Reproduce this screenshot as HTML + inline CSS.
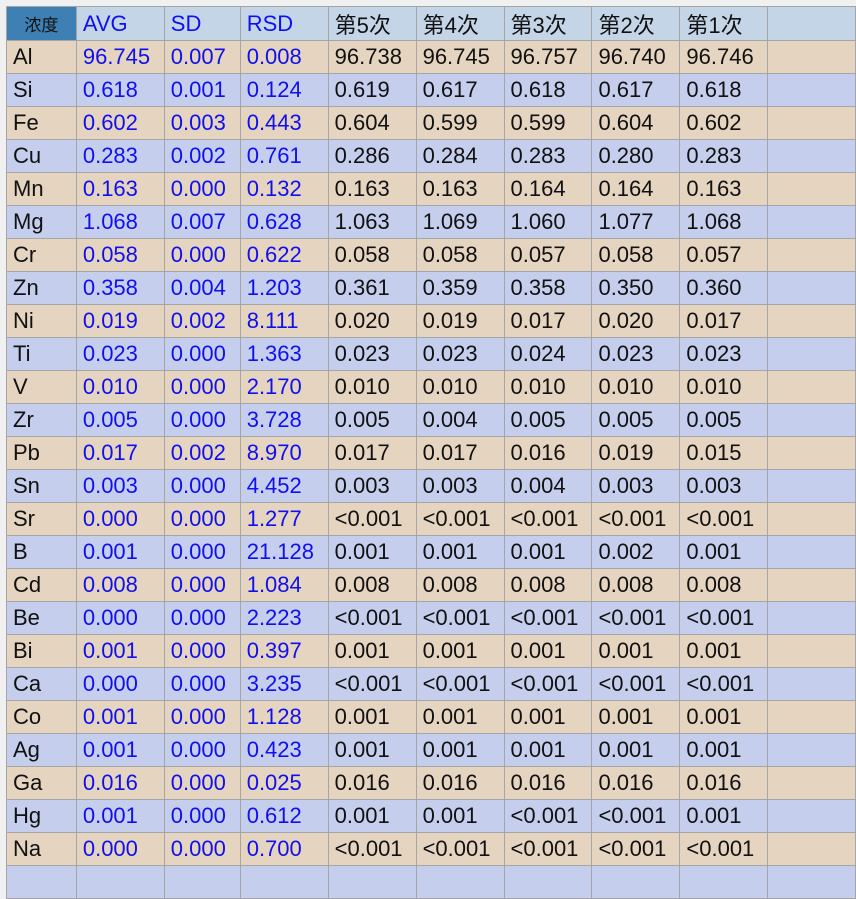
<!DOCTYPE html>
<html><head><meta charset="utf-8"><style>
html,body{margin:0;padding:0;background:#f0f0f0;width:856px;height:887px;overflow:hidden}
table{position:absolute;left:6px;top:6px;border-collapse:collapse;table-layout:fixed;font-family:"Liberation Sans","Noto Sans CJK SC",sans-serif;font-size:22px}
td{border:1px solid #a5a5a5;height:32px;padding:0 0 0 6px;white-space:nowrap;overflow:hidden;color:#111}
tr.h td{height:33px;background:#c3d5e6;color:#1010ee;font-size:22px}
tr.h td.c{background:#3e7fb4;color:#111;font-size:17px;text-align:center;padding:0}
tr.t td{background:#e5d4bf}
tr.b td{background:#c5ceed}
td.v{color:#1010ee}
</style></head><body>
<table>
<colgroup><col style="width:70px"><col style="width:88px"><col style="width:76px"><col style="width:88px"><col style="width:88px"><col style="width:88px"><col style="width:88px"><col style="width:88px"><col style="width:88px"><col style="width:88px"></colgroup>
<tr class="h"><td class="c">浓度</td><td>AVG</td><td>SD</td><td>RSD</td><td style="color:#111">第5次</td><td style="color:#111">第4次</td><td style="color:#111">第3次</td><td style="color:#111">第2次</td><td style="color:#111">第1次</td><td></td></tr>
<tr class="t"><td>Al</td><td class="v">96.745</td><td class="v">0.007</td><td class="v">0.008</td><td>96.738</td><td>96.745</td><td>96.757</td><td>96.740</td><td>96.746</td><td></td></tr>
<tr class="b"><td>Si</td><td class="v">0.618</td><td class="v">0.001</td><td class="v">0.124</td><td>0.619</td><td>0.617</td><td>0.618</td><td>0.617</td><td>0.618</td><td></td></tr>
<tr class="t"><td>Fe</td><td class="v">0.602</td><td class="v">0.003</td><td class="v">0.443</td><td>0.604</td><td>0.599</td><td>0.599</td><td>0.604</td><td>0.602</td><td></td></tr>
<tr class="b"><td>Cu</td><td class="v">0.283</td><td class="v">0.002</td><td class="v">0.761</td><td>0.286</td><td>0.284</td><td>0.283</td><td>0.280</td><td>0.283</td><td></td></tr>
<tr class="t"><td>Mn</td><td class="v">0.163</td><td class="v">0.000</td><td class="v">0.132</td><td>0.163</td><td>0.163</td><td>0.164</td><td>0.164</td><td>0.163</td><td></td></tr>
<tr class="b"><td>Mg</td><td class="v">1.068</td><td class="v">0.007</td><td class="v">0.628</td><td>1.063</td><td>1.069</td><td>1.060</td><td>1.077</td><td>1.068</td><td></td></tr>
<tr class="t"><td>Cr</td><td class="v">0.058</td><td class="v">0.000</td><td class="v">0.622</td><td>0.058</td><td>0.058</td><td>0.057</td><td>0.058</td><td>0.057</td><td></td></tr>
<tr class="b"><td>Zn</td><td class="v">0.358</td><td class="v">0.004</td><td class="v">1.203</td><td>0.361</td><td>0.359</td><td>0.358</td><td>0.350</td><td>0.360</td><td></td></tr>
<tr class="t"><td>Ni</td><td class="v">0.019</td><td class="v">0.002</td><td class="v">8.111</td><td>0.020</td><td>0.019</td><td>0.017</td><td>0.020</td><td>0.017</td><td></td></tr>
<tr class="b"><td>Ti</td><td class="v">0.023</td><td class="v">0.000</td><td class="v">1.363</td><td>0.023</td><td>0.023</td><td>0.024</td><td>0.023</td><td>0.023</td><td></td></tr>
<tr class="t"><td>V</td><td class="v">0.010</td><td class="v">0.000</td><td class="v">2.170</td><td>0.010</td><td>0.010</td><td>0.010</td><td>0.010</td><td>0.010</td><td></td></tr>
<tr class="b"><td>Zr</td><td class="v">0.005</td><td class="v">0.000</td><td class="v">3.728</td><td>0.005</td><td>0.004</td><td>0.005</td><td>0.005</td><td>0.005</td><td></td></tr>
<tr class="t"><td>Pb</td><td class="v">0.017</td><td class="v">0.002</td><td class="v">8.970</td><td>0.017</td><td>0.017</td><td>0.016</td><td>0.019</td><td>0.015</td><td></td></tr>
<tr class="b"><td>Sn</td><td class="v">0.003</td><td class="v">0.000</td><td class="v">4.452</td><td>0.003</td><td>0.003</td><td>0.004</td><td>0.003</td><td>0.003</td><td></td></tr>
<tr class="t"><td>Sr</td><td class="v">0.000</td><td class="v">0.000</td><td class="v">1.277</td><td>&lt;0.001</td><td>&lt;0.001</td><td>&lt;0.001</td><td>&lt;0.001</td><td>&lt;0.001</td><td></td></tr>
<tr class="b"><td>B</td><td class="v">0.001</td><td class="v">0.000</td><td class="v">21.128</td><td>0.001</td><td>0.001</td><td>0.001</td><td>0.002</td><td>0.001</td><td></td></tr>
<tr class="t"><td>Cd</td><td class="v">0.008</td><td class="v">0.000</td><td class="v">1.084</td><td>0.008</td><td>0.008</td><td>0.008</td><td>0.008</td><td>0.008</td><td></td></tr>
<tr class="b"><td>Be</td><td class="v">0.000</td><td class="v">0.000</td><td class="v">2.223</td><td>&lt;0.001</td><td>&lt;0.001</td><td>&lt;0.001</td><td>&lt;0.001</td><td>&lt;0.001</td><td></td></tr>
<tr class="t"><td>Bi</td><td class="v">0.001</td><td class="v">0.000</td><td class="v">0.397</td><td>0.001</td><td>0.001</td><td>0.001</td><td>0.001</td><td>0.001</td><td></td></tr>
<tr class="b"><td>Ca</td><td class="v">0.000</td><td class="v">0.000</td><td class="v">3.235</td><td>&lt;0.001</td><td>&lt;0.001</td><td>&lt;0.001</td><td>&lt;0.001</td><td>&lt;0.001</td><td></td></tr>
<tr class="t"><td>Co</td><td class="v">0.001</td><td class="v">0.000</td><td class="v">1.128</td><td>0.001</td><td>0.001</td><td>0.001</td><td>0.001</td><td>0.001</td><td></td></tr>
<tr class="b"><td>Ag</td><td class="v">0.001</td><td class="v">0.000</td><td class="v">0.423</td><td>0.001</td><td>0.001</td><td>0.001</td><td>0.001</td><td>0.001</td><td></td></tr>
<tr class="t"><td>Ga</td><td class="v">0.016</td><td class="v">0.000</td><td class="v">0.025</td><td>0.016</td><td>0.016</td><td>0.016</td><td>0.016</td><td>0.016</td><td></td></tr>
<tr class="b"><td>Hg</td><td class="v">0.001</td><td class="v">0.000</td><td class="v">0.612</td><td>0.001</td><td>0.001</td><td>&lt;0.001</td><td>&lt;0.001</td><td>0.001</td><td></td></tr>
<tr class="t"><td>Na</td><td class="v">0.000</td><td class="v">0.000</td><td class="v">0.700</td><td>&lt;0.001</td><td>&lt;0.001</td><td>&lt;0.001</td><td>&lt;0.001</td><td>&lt;0.001</td><td></td></tr>
<tr class="b"><td></td><td></td><td></td><td></td><td></td><td></td><td></td><td></td><td></td><td></td></tr>
</table>
</body></html>
